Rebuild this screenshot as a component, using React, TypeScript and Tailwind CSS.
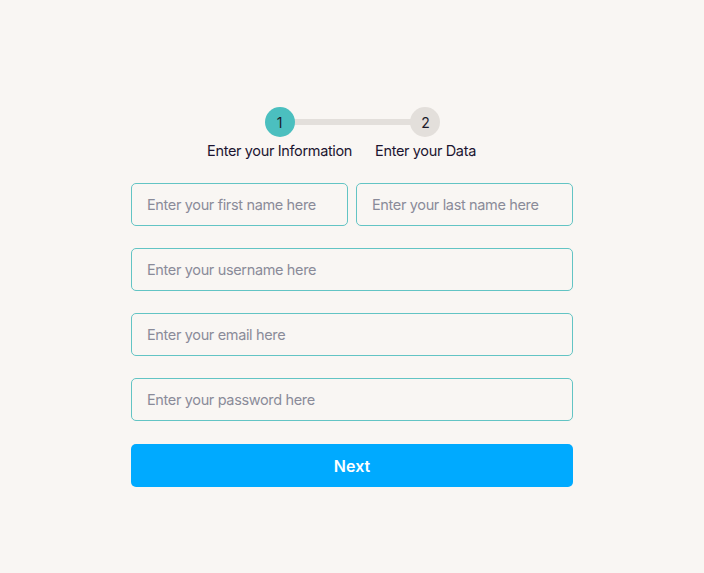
import { useState } from "react";

const STEPS = ["Enter your Information", "Enter your Data"];

function Stepper({ current }: { current: number }) {
  return (
    <div className="mr-[21px] flex justify-center gap-[23px]">
      {STEPS.map((label, index) => (
        <div key={label} className="relative flex flex-col items-center">
          {index < STEPS.length - 1 ? (
            <div className="absolute left-1/2 top-[12px] h-[6px] w-[146px] bg-[#e3dfdb]" />
          ) : null}
          <div
            className={[
              "relative z-10 flex h-[30px] w-[30px] items-center justify-center rounded-full text-[14px]",
              index + 1 === current ? "bg-[#4bbfbf] text-[#1a1a2a]" : "bg-[#e3dfdb] text-[#1a1a2a]",
            ].join(" ")}
          >
            {index + 1}
          </div>
          <span className="mt-[5px] text-[14.5px] leading-[18px] tracking-[-0.35px] text-[#1c1530]">
            {label}
          </span>
        </div>
      ))}
    </div>
  );
}

function Field({ placeholder, type = "text" }: { placeholder: string; type?: string }) {
  const [value, setValue] = useState("");
  return (
    <input
      type={type}
      value={value}
      onChange={(e) => setValue(e.target.value)}
      placeholder={placeholder}
      className="h-[43px] w-full min-w-0 rounded-[5px] border border-[#63c4c4] bg-transparent px-[15px] text-[14.5px] tracking-[-0.35px] text-[#1c1530] outline-none placeholder:text-[#8a8b99]"
    />
  );
}

export default function App() {
  return (
    <div
      className="min-h-screen bg-[#f9f6f3] pt-[107px]"
      style={{ fontFamily: "Inter, 'Noto Sans', sans-serif" }}
    >
      <div className="mx-auto w-[442px]">
        <Stepper current={1} />
        <form className="mt-[23px] flex flex-col gap-[22px]" onSubmit={(e) => e.preventDefault()}>
          <div className="flex gap-[8px]">
            <Field placeholder="Enter your first name here" />
            <Field placeholder="Enter your last name here" />
          </div>
          <Field placeholder="Enter your username here" />
          <Field placeholder="Enter your email here" type="email" />
          <Field placeholder="Enter your password here" type="password" />
          <button
            type="submit"
            className="mt-px h-[43px] w-full rounded-[5px] bg-[#00aaff] text-[16px] font-semibold text-white"
          >
            Next
          </button>
        </form>
      </div>
    </div>
  );
}
